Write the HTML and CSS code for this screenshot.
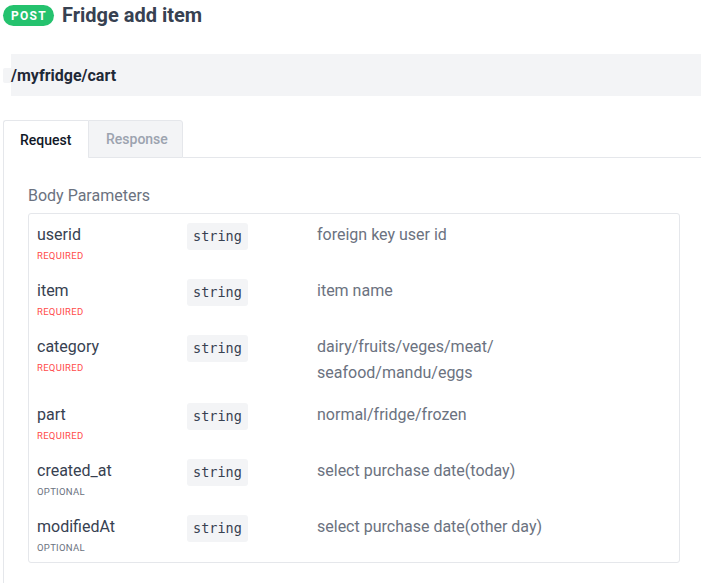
FILE: index.html
```html
<!DOCTYPE html>
<html>
<head>
<meta charset="utf-8">
<link rel="stylesheet" href="styles.css">
</head>
<body>
<div class="page">
  <header class="head">
    <span class="badge">POST</span>
    <h1 class="title">Fridge add item</h1>
  </header>
  <div class="pathrow">
    <span class="pathnub"></span>
    <div class="path">/myfridge/cart</div>
  </div>
  <div class="tabs">
    <div class="tab active">Request</div>
    <div class="tab">Response</div>
    <div class="tabfill"></div>
  </div>
  <div class="panel">
    <div class="section-title">Body Parameters</div>
    <div class="params">
      <div class="row">
        <div class="name">userid<div class="req">REQUIRED</div></div>
        <div class="type"><code class="chip">string</code></div>
        <div class="desc">foreign key user id</div>
      </div>
      <div class="row">
        <div class="name">item<div class="req">REQUIRED</div></div>
        <div class="type"><code class="chip">string</code></div>
        <div class="desc">item name</div>
      </div>
      <div class="row">
        <div class="name">category<div class="req">REQUIRED</div></div>
        <div class="type"><code class="chip">string</code></div>
        <div class="desc">dairy/fruits/veges/meat/<br>seafood/mandu/eggs</div>
      </div>
      <div class="row">
        <div class="name">part<div class="req">REQUIRED</div></div>
        <div class="type"><code class="chip">string</code></div>
        <div class="desc">normal/fridge/frozen</div>
      </div>
      <div class="row">
        <div class="name">created_at<div class="opt">OPTIONAL</div></div>
        <div class="type"><code class="chip">string</code></div>
        <div class="desc">select purchase date(today)</div>
      </div>
      <div class="row">
        <div class="name">modifiedAt<div class="opt">OPTIONAL</div></div>
        <div class="type"><code class="chip">string</code></div>
        <div class="desc">select purchase date(other day)</div>
      </div>
    </div>
  </div>
</div>
</body>
</html>
```
FILE: styles.css
```css
* { box-sizing: border-box; }
html, body { margin: 0; padding: 0; background: #fff; overflow: hidden; }
body { font-family: Roboto, "Liberation Sans", sans-serif; color: #374151; }
.page { padding: 5px 0 0 3px; width: 701px; }

.head { display: flex; align-items: center; gap: 8px; height: 21px; }
.badge {
  display: inline-flex; align-items: center; justify-content: center;
  width: 51px; height: 21px; border-radius: 11px;
  background: #25c26e; color: #fff;
  font-size: 12px; font-weight: 700; letter-spacing: 1.3px;
  padding-left: 1px;
}
.title { margin: 0; font-size: 20px; font-weight: 700; color: #374151; line-height: 21px; }

.pathrow { display: flex; align-items: center; margin-top: 28px; height: 42px; }
.pathnub { width: 8px; height: 15px; background: #f3f4f6; border-radius: 2px 0 0 2px; }
.path {
  flex: 1; height: 42px; background: #f3f4f6;
  display: flex; align-items: center;
  font-size: 16px; font-weight: 700; color: #1f2937;
}

.tabs { display: flex; margin-top: 24px; height: 38px; }
.tab {
  height: 38px; display: flex; align-items: center;
  font-size: 14px; font-weight: 500;
}
.tab.active {
  width: 85px; padding-left: 16px; color: #111827;
  border-top: 1px solid #e5e7eb; border-left: 1px solid #e5e7eb;
  border-radius: 3px 0 0 0; background: #fff;
}
.tab:not(.active) {
  width: 95px; padding-left: 17px; color: #9ca3af;
  background: #f3f4f6; border: 1px solid #e5e7eb;
  border-radius: 0 3px 0 0;
}
.tabfill { flex: 1; border-bottom: 1px solid #e5e7eb; }

.panel { border-left: 1px solid #e5e7eb; padding: 26px 21px 20px 24px; height: 440px; }
.section-title { font-size: 16px; color: #6b7280; line-height: 24px; }
.params {
  margin-top: 5px; border: 1px solid #e5e7eb; border-radius: 3px; width: 652px;
}
.row {
  display: grid; grid-template-columns: 150px 130px 1fr;
  padding: 9px 8px 7px 8px;
}
.name { font-size: 16px; line-height: 24px; color: #374151; }
.req, .opt { font-size: 9.5px; line-height: 14px; letter-spacing: 0.3px; margin-top: 2px; }
.req { color: #ff4b4b; }
.opt { color: #6b7280; }
.chip {
  display: inline-block; background: #f3f4f6; border-radius: 3px;
  font-family: "DejaVu Sans Mono", "Liberation Mono", monospace;
  font-size: 13.5px; line-height: 27px; height: 27px; padding: 0 6px;
  color: #374151;
}
.desc { font-size: 16px; line-height: 26px; color: #6b7280; margin: -1px 0 1px; }
```
